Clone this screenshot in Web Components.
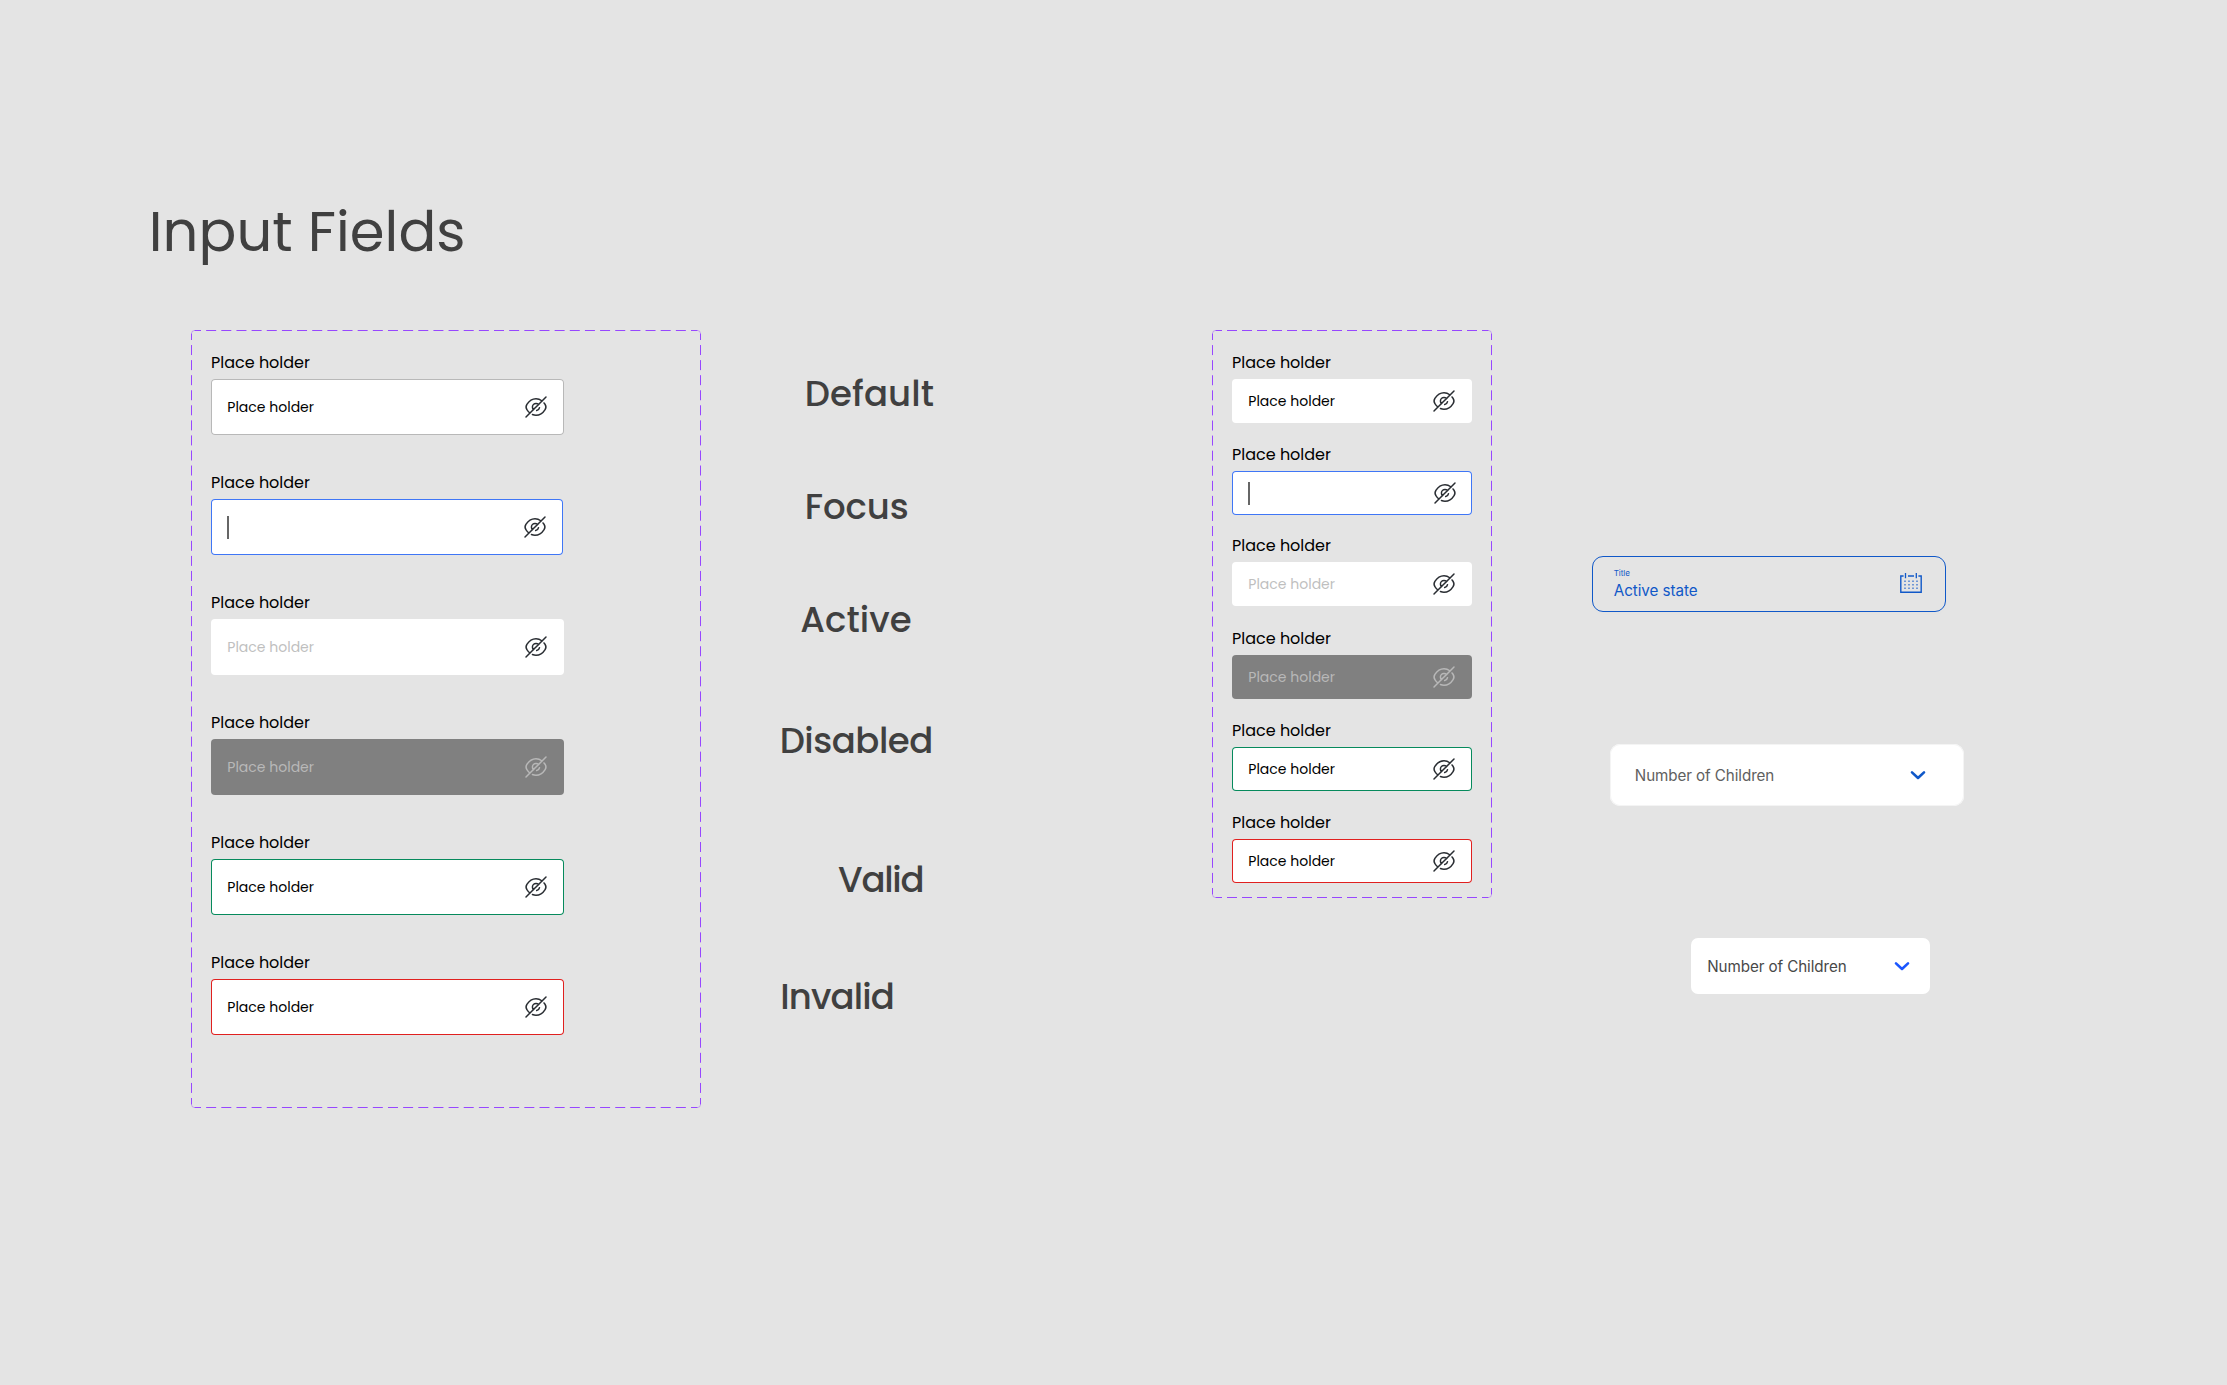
<!DOCTYPE html>
<html lang="en">
<head>
<meta charset="utf-8">
<title>Input Fields</title>
<style>
  html, body { margin: 0; padding: 0; }
  body { background: #e4e4e4; font-family: Poppins, Inter, sans-serif; color: #404040; }
</style>
</head>
<body>
<input-sheet></input-sheet>

<script>
const define = (name, html, setup) => {
  const template = document.createElement('template');
  template.innerHTML = html.trim();
  customElements.define(name, class extends HTMLElement {
    connectedCallback() {
      if (this.shadowRoot) return;
      this.attachShadow({ mode: 'open' }).append(template.content.cloneNode(true));
      if (setup) setup(this, this.shadowRoot);
    }
  });
};

/* Text tracked so that its ink starts at the box edge and spans `w` pixels. */
define('fit-text', `
  <style>
    :host { display: block; white-space: nowrap; }
    span { display: block; width: max-content; }
  </style><span><slot></slot></span>`, (host, root) => {
  const span = root.querySelector('span');
  const text = host.textContent;
  const target = parseFloat(host.getAttribute('w'));
  const cs = getComputedStyle(host);
  const ctx = document.createElement('canvas').getContext('2d');
  ctx.font = `${cs.fontWeight} ${cs.fontSize} ${cs.fontFamily}`;
  const m = ctx.measureText(text);
  const left = -m.actualBoundingBoxLeft;
  const right = m.width - m.actualBoundingBoxRight;
  const ink = span.getBoundingClientRect().width - left - right;
  span.style.letterSpacing = ((target - ink) / (text.length - 1)).toFixed(3) + 'px';
  span.style.marginLeft = (-left).toFixed(2) + 'px';
});

define('eye-slash-icon', `
  <style>:host { display: block; width: 24px; height: 24px; } svg { display: block; }</style>
  <svg width="24" height="24" viewBox="0 0 24 24" fill="none" stroke="currentColor" stroke-width="1.5" stroke-linecap="round" stroke-linejoin="round">
    <path d="M14.53 9.47L9.47 14.53C8.82 13.88 8.42 12.99 8.42 12C8.42 10.02 10.02 8.42 12 8.42C12.99 8.42 13.88 8.82 14.53 9.47Z"/>
    <path d="M17.82 5.77C16.07 4.45 14.07 3.73 12 3.73C8.47 3.73 5.18 5.81 2.89 9.41C1.99 10.82 1.99 13.19 2.89 14.6C3.68 15.84 4.6 16.91 5.6 17.77"/>
    <path d="M8.42 19.53C9.56 20.01 10.77 20.27 12 20.27C15.53 20.27 18.82 18.19 21.11 14.59C22.01 13.18 22.01 10.81 21.11 9.4C20.78 8.88 20.42 8.39 20.05 7.93"/>
    <path d="M15.51 12.7C15.25 14.11 14.1 15.26 12.69 15.52"/>
    <path d="M9.47 14.53L2 22M22 2L14.53 9.47"/>
  </svg>`);

define('calendar-icon', `
  <style>:host { display: block; width: 22px; height: 22px; } svg { display: block; }</style>
  <svg width="22" height="22" viewBox="0 0 22 22" fill="none" stroke="currentColor">
    <path stroke-width="1.4" d="M3.6 4H0.8V20.3H21.2V4H18.4M8 4H14"/>
    <path stroke-width="1.3" d="M5.5 1V6.2M16.3 1V6.2"/>
    <path stroke-width="1.6" stroke-opacity=".55" stroke-dasharray="2 2" d="M4 9.3H18M4 12.8H18M4 16.3H18"/>
  </svg>`);

define('chevron-icon', `
  <style>:host { display: block; width: 16px; height: 10px; } svg { display: block; }</style>
  <svg width="16" height="10" viewBox="0 0 16 10" fill="none" stroke="currentColor" stroke-width="2.6" stroke-linecap="round" stroke-linejoin="round">
    <path d="M2 2.4L8 8L14 2.4"/>
  </svg>`);

/* Frame with a dashed outline whose dashes are fitted to each side. */
define('variant-frame', `
  <style>
    :host { display: block; position: relative; box-sizing: border-box; flex: none; }
    svg { position: absolute; inset: 0; width: 100%; height: 100%; }
    .items { display: flex; flex-direction: column; padding: 21px 20px 0; }
  </style>
  <svg fill="none" stroke="#9747ff" stroke-width="1"></svg>
  <div class="items"><slot></slot></div>`, (host, root) => {
  const w = +host.getAttribute('w'), h = +host.getAttribute('h'), r = 3.5;
  host.style.width = w + 'px';
  host.style.height = h + 'px';
  const gap = n => (n - 10) / Math.round((n - 10) / 15) - 10;
  const line = (d, n) => `<path d="${d}" stroke-dasharray="10 ${gap(n)}" stroke-dashoffset="${r}"/>`;
  const R = w - .5, B = h - .5;
  root.querySelector('svg').innerHTML =
    line(`M${r} .5H${w - r}`, w) + line(`M${r} ${B}H${w - r}`, w) +
    line(`M.5 ${r}V${h - r}`, h) + line(`M${R} ${r}V${h - r}`, h) +
    `<path stroke-opacity=".4" d="M.5 ${r}Q.5 .5 ${r} .5M${w - r} .5Q${R} .5 ${R} ${r}M${R} ${h - r}Q${R} ${B} ${w - r} ${B}M${r} ${B}Q.5 ${B} .5 ${h - r}"/>`;
});

define('text-field', `
  <style>
    :host { display: block; --line: transparent; --h: 56px; --w: 353px; --icon-pad: 16px; }
    :host([size=small]) { --h: 44px; --w: 240px; }
    .label { height: 24px; line-height: 24px; margin-bottom: 4px; font-size: 16px; color: #000; padding-left: 1px; }
    .box { display: flex; align-items: center; justify-content: space-between; box-sizing: border-box;
      width: var(--w); height: var(--h); padding: 0 var(--icon-pad) 0 17.3px; border-radius: 4px;
      background: #fff; box-shadow: inset 0 0 0 1px var(--line); color: #000; }
    .value { font-size: 14px; line-height: 20px; }
    .caret { width: 1.5px; height: 23px; margin-left: -1.3px; background: #666; }
    eye-slash-icon { color: #292d32; }
    :host([state=default]) { --line: #b8b8b8; }
    :host([state=focus]) { --line: #3f76f6; }
    :host([state=active]) .value { color: #bfbfbf; }
    :host([state=disabled]) .box { background: #808080; }
    :host([state=disabled]) .value, :host([state=disabled]) eye-slash-icon { color: #b8b8b8; }
    :host([state=valid]) { --line: #068a5c; }
    :host([state=invalid]) { --line: #e0201f; }
  </style>
  <fit-text class="label" w="98">Place holder</fit-text>
  <div class="box"><i class="caret"></i><fit-text class="value" w="85.5">Place holder</fit-text><eye-slash-icon></eye-slash-icon></div>`,
  (host, root) => {
    root.querySelector(host.getAttribute('state') === 'focus' ? '.value' : '.caret').remove();
  });

define('date-field', `
  <style>
    :host { display: flex; align-items: center; justify-content: space-between; box-sizing: border-box;
      width: 354px; height: 56px; padding: 0 24px 0 22.5px; border-radius: 11px; color: #1058c8;
      border: 1px solid #1058c8; box-shadow: 0 2px 6px rgba(0,0,0,.012); font-family: Inter, sans-serif; }
    .title { font-size: 8px; line-height: 10px; margin-top: 1px; }
    .value { font-size: 15.2px; line-height: 20px; margin-top: 3px; }
    div { margin-left: -1.8px; }
    calendar-icon { margin-top: -2px; margin-right: -1px; }
  </style>
  <div><fit-text class="title" w="16.5">Title</fit-text><fit-text class="value" w="84">Active state</fit-text></div>
  <calendar-icon></calendar-icon>`);

define('select-field', `
  <style>
    :host { display: flex; align-items: center; justify-content: space-between; box-sizing: border-box;
      width: 354px; height: 62px; padding: 0 38px 0 25.8px; border-radius: 10px; background: #fff; color: #606060;
      box-shadow: inset 0 0 0 1px #f4f4f4; font-family: Inter, sans-serif; font-size: 15.2px; line-height: 20px; }
    fit-text { padding-top: 1px; }
    chevron-icon { color: #1058c8; }
    :host([size=small]) { width: 239px; height: 56px; padding: 0 20px 0 17.2px; border-radius: 7px; color: #484848; box-shadow: none; }
    :host([size=small]) chevron-icon { color: #1a56ff; }
  </style>
  <fit-text w="137.5">Number of Children</fit-text><chevron-icon></chevron-icon>`);

define('input-sheet', `
  <style>
    :host { display: flex; flex-direction: column; box-sizing: border-box; width: 2227px; height: 1385px; overflow: hidden; }
    h1 { margin: 190px 0 0 152.8px; height: 84px; line-height: 84px; font-weight: 400; font-size: 56px; color: #404040; }
    .row { display: flex; align-items: flex-start; margin: 56px 0 0 191px; }
    .names { width: 511px; display: flex; flex-direction: column; font-weight: 500; font-size: 35.5px; line-height: 54px; color: #404040; }
    .names fit-text { height: 54px; }
    .large text-field + text-field { margin-top: 36px; }
    .small text-field + text-field { margin-top: 20px; }
    .others { display: flex; flex-direction: column; }
  </style>
  <h1><fit-text w="310.5">Input Fields</fit-text></h1>
  <div class="row">
    <variant-frame class="large" w="510" h="778">
      <text-field state="default"></text-field>
      <text-field state="focus" style="--w:352px"></text-field>
      <text-field state="active"></text-field>
      <text-field state="disabled"></text-field>
      <text-field state="valid"></text-field>
      <text-field state="invalid"></text-field>
    </variant-frame>
    <div class="names">
      <fit-text w="127" style="margin:37px 0 0 105.7px">Default</fit-text>
      <fit-text w="101" style="margin:59px 0 0 105.7px">Focus</fit-text>
      <fit-text w="109.5" style="margin:59px 0 0 100.3px">Active</fit-text>
      <fit-text w="149.5" style="margin:67px 0 0 80.7px">Disabled</fit-text>
      <fit-text w="84.5" style="margin:85px 0 0 137px">Valid</fit-text>
      <fit-text w="110.5" style="margin:63px 0 0 81.3px">Invalid</fit-text>
    </div>
    <variant-frame class="small" w="280" h="568">
      <text-field size="small" state="filled"></text-field>
      <text-field size="small" state="focus" style="--icon-pad:15px"></text-field>
      <text-field size="small" state="active" style="margin-top:19px"></text-field>
      <text-field size="small" state="disabled" style="margin-top:21px"></text-field>
      <text-field size="small" state="valid"></text-field>
      <text-field size="small" state="invalid"></text-field>
    </variant-frame>
    <div class="others">
      <date-field style="margin:226px 0 0 100px"></date-field>
      <select-field style="margin:132px 0 0 118px"></select-field>
      <select-field size="small" style="margin:132px 0 0 199px"></select-field>
    </div>
  </div>`);
</script>
</body>
</html>
